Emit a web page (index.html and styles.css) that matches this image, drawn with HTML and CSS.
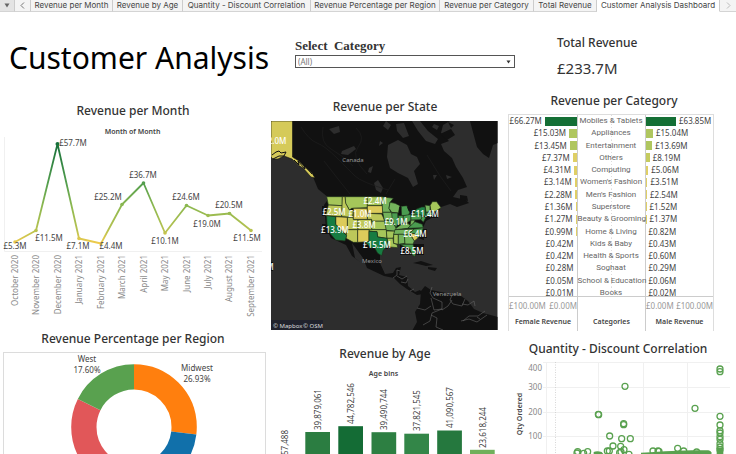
FILE: index.html
```html
<!DOCTYPE html>
<html lang="en">
<head>
<meta charset="utf-8">
<meta name="viewport" content="width=device-width, initial-scale=1">
<title>Customer Analysis Dashboard</title>
<link rel="stylesheet" href="styles.css">
</head>
<body>
<nav class="tabs" aria-label="Sheets">
  <button class="tab tab-menu" aria-label="All sheets"><svg width="6" height="5" viewBox="0 0 6 5"><path d="M.5 .5h5L3 4.5z" fill="#666"/></svg></button>
  <button class="tab" aria-label="Previous sheets"><svg width="5" height="7" viewBox="0 0 5 7"><path d="M4 .5 1 3.500 4 6.500" fill="none" stroke="#777"/></svg></button>
  <a class="tab" href="#month">Revenue per Month</a>
  <a class="tab" href="#age">Revenue by Age</a>
  <a class="tab" href="#discount">Quantity - Discount Correlation</a>
  <a class="tab" href="#region">Revenue Percentage per Region</a>
  <a class="tab" href="#category">Revenue per Category</a>
  <a class="tab" href="#total">Total Revenue</a>
  <a class="tab tab-active" href="#top" aria-current="page">Customer Analysis Dashboard</a>
  <button class="tab tab-last" aria-label="Next sheets"><svg width="5" height="7" viewBox="0 0 5 7"><path d="M1 .5 4 3.500 1 6.500" fill="none" stroke="#bbb"/></svg></button>
</nav>

<main class="dashboard" id="top">
  <header class="header">
    <h1>Customer Analysis</h1>
    <div class="filter">
      <label for="cat">Select  Category</label>
      <div class="select-box">
        <select id="cat"><option>(All)</option></select>
        <svg class="caret" width="5" height="4" viewBox="0 0 5 4"><path d="M.5 .5h4L2.500 3.500z" fill="#333"/></svg>
      </div>
    </div>
    <div class="total" id="total">
      <h2>Total Revenue</h2>
      <p>£233.7M</p>
    </div>
  </header>

  <div class="charts">
    <div class="column column-left">
      <section id="month">
        <h2>Revenue per Month</h2>
        <svg class="chart" viewBox="0 120 270 204" role="img" aria-label="Revenue per month">
          <defs>
            <linearGradient id="rev" gradientUnits="userSpaceOnUse" x1="0" y1="144" x2="0" y2="244">
              <stop offset="0" stop-color="#17703a"/><stop offset=".4" stop-color="#559f4e"/><stop offset=".62" stop-color="#8cb850"/><stop offset=".86" stop-color="#b7c250"/><stop offset="1" stop-color="#f3cb4b"/>
            </linearGradient>
          </defs>
          <text class="sub" x="132.500" y="134" text-anchor="middle">Month of Month</text>
          <path d="M4.500 137V251.500H262" fill="none" stroke="#f0f0f0"/>
          <path d="M15 242 36 230.500 57.500 144 79 238.500 101 243.500 122 204.500 143.500 183 165 233 186.500 205.500 208 215.500 229.500 213.500 251 230.500" fill="none" stroke="url(#rev)" stroke-width="1.800" stroke-linejoin="round"/>
          <g fill="url(#rev)">
            <circle cx="15" cy="242" r="1.800"/><circle cx="36" cy="230.500" r="1.800"/><circle cx="57.500" cy="144" r="2"/><circle cx="79" cy="238.500" r="1.800"/><circle cx="101" cy="243.500" r="1.800"/><circle cx="122" cy="204.500" r="1.800"/><circle cx="143.500" cy="183" r="1.800"/><circle cx="165" cy="233" r="1.800"/><circle cx="186.500" cy="205.500" r="1.800"/><circle cx="208" cy="215.500" r="1.800"/><circle cx="229.500" cy="213.500" r="1.800"/><circle cx="251" cy="230.500" r="1.800"/>
          </g>
          <g class="val" text-anchor="middle">
            <text x="15" y="249">£5.3M</text><text x="49" y="241">£11.5M</text><text x="73" y="146">£57.7M</text><text x="78" y="249">£7.1M</text><text x="111" y="249">£4.4M</text><text x="108" y="200">£25.2M</text><text x="143" y="178">£36.7M</text><text x="165" y="244">£10.1M</text><text x="186" y="200">£24.6M</text><text x="207" y="227">£19.0M</text><text x="229" y="208">£20.5M</text><text x="247" y="241">£11.5M</text>
          </g>
          <g class="axis" text-anchor="end">
            <text transform="translate(18 255) rotate(-90)">October 2020</text>
            <text transform="translate(39 255) rotate(-90)">November 2020</text>
            <text transform="translate(61 255) rotate(-90)">December 2020</text>
            <text transform="translate(82 255) rotate(-90)">January 2021</text>
            <text transform="translate(104 255) rotate(-90)">February 2021</text>
            <text transform="translate(125 255) rotate(-90)">March 2021</text>
            <text transform="translate(147 255) rotate(-90)">April 2021</text>
            <text transform="translate(168 255) rotate(-90)">May 2021</text>
            <text transform="translate(190 255) rotate(-90)">June 2021</text>
            <text transform="translate(211 255) rotate(-90)">July 2021</text>
            <text transform="translate(232 255) rotate(-90)">August 2021</text>
            <text transform="translate(254 255) rotate(-90)">September 2021</text>
          </g>
        </svg>
      </section>
      <section id="region">
        <h2>Revenue Percentage per Region</h2>
        <svg class="chart" viewBox="0 348 270 106" role="img" aria-label="Revenue percentage per region">
          <rect x="3.500" y="352.500" width="262" height="151" fill="#fff" stroke="#dcdcdc"/>
          <g fill="none" stroke-width="25.300" transform="rotate(-90 134 427)">
            <circle cx="134" cy="427" r="50.150" pathLength="100" stroke="#ff7f0e" stroke-dasharray="26.930 100"/>
            <circle cx="134" cy="427" r="50.150" pathLength="100" stroke="#1170aa" stroke-dasharray="26.070 100" stroke-dashoffset="-26.930"/>
            <circle cx="134" cy="427" r="50.150" pathLength="100" stroke="#e15759" stroke-dasharray="29.400 100" stroke-dashoffset="-53"/>
            <circle cx="134" cy="427" r="50.150" pathLength="100" stroke="#59a14f" stroke-dasharray="17.600 100" stroke-dashoffset="-82.400"/>
          </g>
          <g class="val" text-anchor="middle">
            <text x="87" y="362">West</text><text x="87" y="373">17.60%</text>
            <text x="197" y="371">Midwest</text><text x="197" y="382">26.93%</text>
          </g>
        </svg>
      </section>
    </div>

    <div class="column column-mid">
      <section id="state">
        <h2>Revenue per State</h2>
        <svg class="chart" viewBox="270 116 230 216" role="img" aria-label="Map of revenue per state">
          <defs><clipPath id="frame"><rect x="271" y="121" width="226.500" height="209"/></clipPath></defs>
          <g clip-path="url(#frame)">
            <rect x="271" y="121" width="227" height="209" fill="#2d2d2d"/>
            <path fill="#111" d="M292 121H450L443 125 441 133 446 138 449 141 441 144 444 151 452 158 456 167 463 178 467 187 458 190 453 197 466 200 469 203 457 207 450 204 441 207 437 215 426 221 422 230 424 240 412 236 403 237 380 240 380 263 385 274 393 273 396 268 401 267 399 275 407 277 408 286 415 292 420 290 423 294 417 295 407 289 400 284 394 278 384 276 367 268 363 258 352 243 355 258 360 262 352 256 346 245 331 238 326 228 324 205 329 198 318 189 313 177 304 166 292 157z"/>
            <path fill="#111" d="M421 291 425 286 431 290 446 293 461 296 468 301 474 309 483 313 498 317V331H412L417 322 415 312 420 304zM470 121H498V143L493 145 489 158 483 154 477 147 474 136z"/>
            <path fill="#111" d="M451 129 455 135 447 140 440 134zM448 122 454 125 451 128zM413 263l8-2 12 4-7 1-8-2zM428 267l9 1-2 3-7-2zM460 195l7 1 1 5-8-2z"/>
            <path fill="#2d2d2d" d="M388 145 398 140 407 145 411 154 417 157 420 164 414 171 418 184 413 187 408 178 398 173 390 168 387 157zM420 121l8 10 10 8-3 5-9-3-8-10-6-10zM396 124l8-1 5 13-6 2-6-7zM329 129l10-3 1 6-6 2zM342 151l12-5 2 3-8 6-7-1zM369 168l4-2-2 7-3-1zM374 183l4-3 5 8-2 5-5-3zM386 121l5 4-3 5-5-4zM380 141l3 2-4 3zM433 175l4 0-3 5zM434 124l5 2-2 4-5-3zM446 175l6 2-5 2z"/>
            <g fill="none" stroke="#1e1e1e" stroke-width=".7"><path d="M301 127q8 13 16 16t20 15 18 18 33 14M323 127q-3 16 8 22t22 17M356 128q10 9 2 19t9 27M427 155l13 21 11 15M350 194l-12-15-14-18M395 179l-9 15"/></g>
            <g fill="none" stroke="#656565" stroke-width=".6"><path d="M393 278l4-3 0-5 3 1M397 276l5 3 5-3M401 282l5 1 2-4M410 291l4-2M432 287l-2 6 3 5 9 4 0 8 6-4 4-6M452 295l-2 5 3 4 9 2 3-7M462 304l6 1 6-4 1 5M431 298l3 12 8-1M442 309l-10 4-2 8-7 4M417 308l8 2 6-4M431 315l6 3-1 9 7 3M463 321l6-5 9 0 7-5M461 321l8-2 8 3 10-7M480 319l-3-2"/></g>

            <path fill="#d5ca59" stroke="#111" stroke-width=".6" d="M271 121H292.500V157L299 161 304 166 312 173 315 178 311 177 303 168 298 165 292 159 284 156 278 159 273 159 271 157z"/>
            <path d="M272 155l4-3 3-1 2 2 5-1-2 4-5 0-6 3M294 160l5 5-1-4 7 8-1-4 8 9" fill="none" stroke="#111" stroke-width="1"/>

            <g fill="#111"><rect x="322" y="206" width="25" height="10"/><rect x="322" y="224" width="26" height="10"/><rect x="363" y="239" width="25" height="10"/><rect x="411" y="208" width="27" height="10"/><rect x="404" y="229" width="23" height="9"/><rect x="400" y="244" width="24" height="11"/><rect x="267" y="262" width="6" height="9"/></g>
            <g transform="translate(315 185) scale(.33333)" stroke="#20301a" stroke-width="2" stroke-linejoin="round">
              <g fill="#a5c65a"><path d="M35 35H82V62L40 60z"/><path d="M90 35H157V68L110 70 103 75 92 55z"/><path d="M157 35H200L201 62H157z"/><path d="M170 108H212L214 134H170z"/><path d="M162 134H214L216 160 188 156 186 140 162 139z"/><path d="M214 138 240 138 234 160H216z"/><path d="M216 160H234L236 175 246 178 248 188 225 186 220 182z"/><path d="M236 148H250V178L236 175z"/><path d="M345 62 352 50 365 50 378 68 360 80 348 78z"/></g>
              <g fill="#bdc85a"><path d="M40 60 82 62 80 95 32 92z"/><path d="M82 35H90L92 55 103 75 115 76 113 97 80 95z"/><path d="M97 97H115V103H129V134H97z"/><path d="M129 103H170V134H129z"/><path d="M95 134H128V172H115L93 160z"/><path d="M157 85 200 87 210 108H170V103H157z"/></g>
              <g fill="#dccb5b"><path d="M62 95 97 97V140L92 148 62 118z"/><path d="M115 70H157V103H115z"/><path d="M128 134H162V170L128 172z"/><path d="M157 62H203L204 85H157z"/><path d="M285 148 298 145 310 158 298 168z"/></g>
              <g fill="#177c42"><path d="M35 92 62 95V118L95 152 90 168 62 165 45 145 36 118z"/><path d="M162 139 186 140 188 156 216 160 220 182 205 195 200 212 188 205 178 187 168 190 150 170H162z"/></g>
              <g fill="#74b35c"><path d="M200 35 235 40 225 52 222 70 228 82H203z"/><path d="M203 82H230L236 95 230 107 208 106z"/><path d="M208 106 230 107 244 130 240 138 214 136z"/><path d="M225 52 240 55 255 62 250 84 230 82 222 70z"/><path d="M245 128 264 115 278 115 288 122 278 130 240 134z"/><path d="M240 134 298 132 280 148H236z"/><path d="M250 148H268L270 175 250 178z"/><path d="M268 148H285L298 168 294 178 270 177z"/><path d="M288 105H300L295 120 285 122z"/><path d="M330 60 345 62V80L333 82z"/></g>
              <g fill="#4a9c50"><path d="M230 84H248L250 115 243 128 232 108z"/><path d="M258 64 275 62 285 80 280 92H260z"/><path d="M250 92H265L264 115 250 120z"/><path d="M265 92 288 88V105L275 115 264 112z"/><path d="M255 178H294L302 200 300 215 292 210 284 190 268 185z"/><path d="M280 148 298 132 325 128 320 145 310 158 298 145z"/><path d="M278 130 300 110 322 118 325 128z"/><path d="M288 88 318 86 322 98 318 104 288 105z"/><path d="M322 92 332 98 325 112 318 104z"/><path d="M333 82H352L350 92 333 94z"/></g>
              <path fill="#218347" d="M290 86 305 72 320 66 330 66 333 95 318 90z"/>
              <path fill="#111" stroke="none" d="M236 44l18 6 16 4 6 7-18 2-12-7zM253 66l6 0-2 24-5-3zM276 66l9 4 2 12-6-3zM286 86l14-6-2 5-10 4z"/>
            </g>
            <g class="map-val" text-anchor="middle">
              <text x="277" y="144">2.0M</text><text x="375" y="204">£2.4M</text><text x="334" y="215">£2.5M</text><text x="360" y="217">£1.0M</text><text x="364" y="228">£3.8M</text><text x="335" y="233">£13.9M</text><text x="396" y="225">£9.1M</text><text x="425" y="217">£11.4M</text><text x="415" y="237">£6.4M</text><text x="377" y="248">£15.5M</text><text x="412" y="254">£8.5M</text><text x="270" y="270">M</text>
            </g>
            <g class="country" text-anchor="middle"><text x="353" y="162">Canada</text><text x="372" y="263">Mexico</text><text x="447" y="296">Venezuela</text></g>
            <rect x="271" y="320" width="52" height="10" fill="#20222d"/>
            <text class="credit" x="273" y="328">© Mapbox</text><text class="credit" x="303" y="328">© OSM</text>
          </g>
        </svg>
      </section>
      <section id="age">
        <h2>Revenue by Age</h2>
        <svg class="chart" viewBox="270 363 230 91" role="img" aria-label="Revenue by age">
          <text class="sub" x="383.500" y="376" text-anchor="middle">Age bins</text>
          <rect x="305.300" y="432" width="24.700" height="72" fill="#2b7d41"/>
          <rect x="338.300" y="426.200" width="24.700" height="78" fill="#146c35"/>
          <rect x="371.500" y="432.200" width="24.700" height="72" fill="#2d7f42"/>
          <rect x="404.300" y="433.700" width="24.700" height="71" fill="#338648"/>
          <rect x="437.200" y="430.500" width="24.700" height="74" fill="#25783e"/>
          <rect x="470" y="449.800" width="24.700" height="55" fill="#70b05b"/>
          <g class="val">
            <text transform="translate(288 455) rotate(-90)">57,488</text>
            <text transform="translate(321 430) rotate(-90)">39,879,061</text>
            <text transform="translate(354 424) rotate(-90)">44,782,546</text>
            <text transform="translate(387 430) rotate(-90)">39,490,744</text>
            <text transform="translate(420 431) rotate(-90)">37,821,545</text>
            <text transform="translate(453 428) rotate(-90)">41,090,567</text>
            <text transform="translate(486 448) rotate(-90)">23,618,244</text>
          </g>
        </svg>
      </section>
    </div>

    <div class="column column-right">
      <section id="category">
        <h2>Revenue per Category</h2>
        <div class="cat-box">
          <div class="cat-scroll">
            <table class="cat-table"><tbody id="rows"></tbody></table>
          </div>
          <div class="cat-foot">
            <div><p class="ticks"><span>£100.00M</span><span>£0.00M</span></p><strong>Female Revenue</strong></div>
            <div><p class="ticks"></p><strong>Categories</strong></div>
            <div><p class="ticks"><span>£0.00M</span><span>£100.00M</span></p><strong>Male Revenue</strong></div>
          </div>
        </div>
      </section>
      <section id="discount">
        <h2>Quantity - Discount Correlation</h2>
        <svg class="chart" viewBox="500 357 236 97" role="img" aria-label="Quantity against discount">
          <path d="M543 361.500H730M543 386.500H730M543 411.500H730M543 435.500H730M546.500 361V504M598.500 361V504M643.500 361V504M687.500 361V504" fill="none" stroke="#f0f0f0"/>
          <path d="M555.500 361V504" stroke="#ccc" stroke-dasharray="1 1.500" stroke-width=".8"/>
          <g class="axis" text-anchor="end"><text x="542" y="370">400</text><text x="542" y="389">300</text><text x="542" y="414">200</text><text x="542" y="438">100</text></g>
          <text class="sub" text-anchor="middle" transform="translate(522 413) rotate(-90)">Qty Ordered</text>
          <g transform="translate(505 335) scale(.33333)" fill="none" stroke="#59a14f" stroke-width="3.800">
            <path d="M266 360V348Q276 343 290 348L300 360zM408 360V350L436 349 480 346 560 343 610 343Q620 346 620 352L616 360zM635 360V335H655V360z" fill="#59a14f" stroke="none"/>
            <circle cx="360" cy="151" r="9"/><circle cx="281" cy="236" r="9"/><circle cx="280" cy="235" r="9"/><circle cx="356" cy="263" r="9"/><circle cx="356" cy="266" r="9"/><circle cx="570" cy="217" r="9"/><circle cx="314" cy="300" r="9"/><circle cx="350" cy="308" r="9"/><circle cx="376" cy="308" r="9"/><circle cx="324" cy="330" r="9"/><circle cx="347" cy="331" r="9"/><circle cx="357" cy="341" r="9"/><circle cx="307" cy="345" r="9"/><circle cx="313" cy="345" r="9"/><circle cx="218" cy="347" r="9"/><circle cx="216" cy="351" r="9"/><circle cx="236" cy="352" r="9"/><circle cx="248" cy="347" r="9"/><circle cx="344" cy="350" r="9"/><circle cx="348" cy="348" r="9"/><circle cx="372" cy="355" r="9"/><circle cx="444" cy="345" r="9"/><circle cx="459" cy="345" r="9"/><circle cx="462" cy="346" r="9"/><circle cx="518" cy="337" r="9"/><circle cx="536" cy="345" r="9"/><circle cx="575" cy="348" r="9"/>
            <circle cx="645" cy="99" r="9"/><circle cx="645" cy="107" r="9"/><circle cx="645" cy="241" r="9"/><circle cx="645" cy="267" r="9"/><circle cx="645" cy="284" r="9"/><circle cx="645" cy="291" r="9"/><circle cx="645" cy="302" r="9"/><circle cx="645" cy="310" r="9"/><circle cx="645" cy="323" r="9"/><circle cx="645" cy="333" r="9"/><circle cx="645" cy="341" r="9"/>
          </g>
        </svg>
      </section>
    </div>
  </div>
</main>
<script src="script.js"></script>
</body>
</html>
```
FILE: styles.css
```css
* {
  box-sizing: border-box;
}

body {
  margin: 0;
  background: #fff;
  color: #444;
  font: 8px/12px "Noto Sans", sans-serif;
}

h1, h2, p {
  margin: 0;
  font-weight: 400;
}

h2 {
  color: #333;
  font-size: 12px;
  font-weight: 500;
  line-height: 18px;
  text-align: center;
  white-space: nowrap;
}

.tabs {
  display: grid;
  grid-template-columns: 15fr 16fr 82fr 70fr 128fr 129fr 94fr 63fr 123fr 16fr;
  height: 12px;
  background: #f4f4f4;
}

.tab {
  display: flex;
  align-items: center;
  justify-content: center;
  min-width: 0;
  padding: 0;
  border: 0;
  border-right: 1px solid #ccc;
  border-bottom: 1px solid #d4d4d4;
  background: none;
  color: #444;
  font: 8px/11px Inter, sans-serif;
  text-decoration: none;
  white-space: nowrap;
}

.tab-menu {
  background: #e4e4e4;
}

.tab-active {
  border-bottom-color: #fff;
  background: #fff;
}

.tab-last {
  border-right: 0;
}

.header {
  display: grid;
  grid-template-columns: 295fr 220fr 221fr;
  height: 80px;
}

h1 {
  padding: 28px 0 0 9px;
  color: #000;
  font-size: 30px;
  line-height: 36px;
  white-space: nowrap;
}

.filter {
  padding-top: 26px;
}

.filter label {
  display: block;
  color: #333;
  font: bold 13px/16px "Liberation Serif", serif;
  white-space: pre;
}

.select-box {
  display: flex;
  position: relative;
  margin-top: 1px;
}

.select-box select {
  width: 100%;
  height: 13px;
  padding: 0 2px;
  border: 1px solid #555;
  border-radius: 0;
  appearance: none;
  background: #fff;
  color: #777;
  font: 8px/11px "Noto Sans", sans-serif;
}

.caret {
  position: absolute;
  top: 5px;
  right: 4px;
  pointer-events: none;
}

.total {
  padding: 22px 0 0 42px;
}

.total h2 {
  text-align: left;
}

.total p {
  margin-top: 6px;
  color: #333;
  font-size: 15px;
  line-height: 20px;
}

.charts {
  display: grid;
  grid-template-columns: 270fr 230fr 236fr;
}

.column {
  display: flex;
  flex-direction: column;
  min-width: 0;
}

.column-left {
  padding-top: 10px;
  gap: 6px;
}

.column-mid {
  padding-top: 6px;
  gap: 13px;
}

.column-right {
  gap: 9px;
}

.chart {
  display: block;
  width: 100%;
}

.column-left h2 {
  padding-right: 4px;
}

#category h2 {
  padding-right: 8px;
}

.chart text {
  font-family: "Noto Sans", sans-serif;
}

.val {
  fill: #444;
  font-size: 8px;
}

.axis {
  fill: #888;
  font-size: 8px;
}

.sub {
  fill: #444;
  font-size: 7px;
  font-weight: 600;
}

.map-val {
  fill: #fff;
  font-size: 8px;
  font-weight: 500;
}

.country {
  fill: #999;
  font-size: 6px;
}

.credit {
  fill: #ddd;
  font-size: 6px;
}

.cat-box {
  margin: 4px 22px 0 8px;
  border: 1px solid #ddd;
  border-bottom: 0;
}

.cat-scroll {
  height: 181px;
  overflow: hidden;
}

.cat-table {
  width: 100%;
  height: 184px;
  border-collapse: collapse;
  table-layout: fixed;
}

.cat-table td,
.cat-table th {
  padding: 0;
  font-weight: 400;
  line-height: 12px;
  text-align: center;
  white-space: nowrap;
}

.cat-table th {
  border: solid #ccc;
  border-width: 0 1px;
  background: repeating-linear-gradient(#ddd 0 1px, transparent 1px 3px) center / 1px 100% no-repeat;
  color: #666;
  font-family: Roboto, sans-serif;
}

.cell {
  display: flex;
  align-items: center;
  gap: 3px;
}

.cell-female {
  flex-direction: row-reverse;
}

.bar {
  flex: none;
  height: 9px;
}

.cat-foot {
  display: grid;
  grid-template-columns: repeat(3, minmax(0, 1fr));
  border-top: 1px solid #ccc;
  text-align: center;
}

.cat-foot > div {
  height: 34px;
  padding-top: 3px;
}

.cat-foot > div + div {
  border-left: 1px solid #ccc;
}

.ticks {
  display: flex;
  justify-content: space-between;
  height: 16px;
  color: #999;
  white-space: nowrap;
}

.cat-foot strong {
  display: block;
  font-size: 7px;
  font-weight: 600;
  line-height: 12px;
}
```
FILE: script.js
```js
const data = [
  ["Mobiles & Tablets", 66.27, 63.85],
  ["Appliances", 15.03, 15.04],
  ["Entertainment", 13.45, 13.69],
  ["Others", 7.37, 8.19],
  ["Computing", 4.31, 5.06],
  ["Women's Fashion", 3.14, 3.51],
  ["Men's Fashion", 2.28, 2.54],
  ["Superstore", 1.36, 1.52],
  ["Beauty & Grooming", 1.27, 1.37],
  ["Home & Living", 0.99, 0.82],
  ["Kids & Baby", 0.42, 0.43],
  ["Health & Sports", 0.42, 0.60],
  ["Soghaat", 0.28, 0.29],
  ["School & Education", 0.05, 0.06],
  ["Books", 0.01, 0.02]
];

function color(v) {
  if (v > 50) return "#146f35";
  if (v > 10) return "#afc65f";
  if (v > 8) return "#c5cb5f";
  return "#dfcf66";
}

function cell(v, side) {
  const width = v < 0.9 ? 0 : v * 0.7 + 0.5;
  return `<td><div class="cell cell-${side}">
    <span class="bar" style="width:${width}%;background:${color(v)}"></span>
    <span>£${v.toFixed(2)}M</span></div></td>`;
}

document.getElementById("rows").innerHTML = data.map(([name, f, m]) =>
  `<tr>${cell(f, "female")}<th scope="row">${name.replace("&", "&amp;")}</th>${cell(m, "male")}</tr>`
).join("");
```
